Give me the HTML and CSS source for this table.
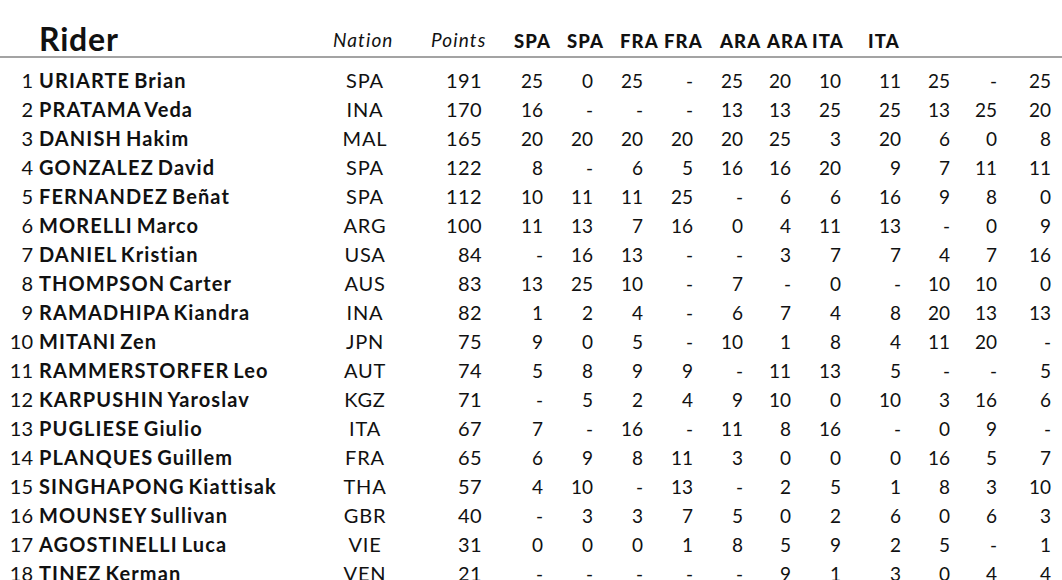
FILE: index.html
```html
<!DOCTYPE html>
<html>
<head>
<meta charset="utf-8">
<link rel="stylesheet" href="styles.css">
</head>
<body>
<div class="standings">
  <div class="head">
    <div class="h-rider">Rider</div>
    <div class="h-sub h-nation">Nation</div>
    <div class="h-sub h-points">Points</div>
    <div class="h-race w53">SPA</div>
    <div class="h-race w53">SPA</div>
    <div class="h-race w44">FRA</div>
    <div class="h-race w56">FRA</div>
    <div class="h-race w47">ARA</div>
    <div class="h-race w45">ARA</div>
    <div class="h-race w56">ITA</div>
    <div class="h-race">ITA</div>
  </div>
  <div class="rows">
    <div class="row"><span class="pos">1</span><span class="name">URIARTE Brian</span><span class="nat">SPA</span><span class="pts">191</span><span class="v">25</span><span class="v">0</span><span class="v">25</span><span class="v">-</span><span class="v">25</span><span class="v">20</span><span class="v">10</span><span class="v">11</span><span class="v">25</span><span class="v">-</span><span class="v">25</span></div>
    <div class="row"><span class="pos">2</span><span class="name">PRATAMA Veda</span><span class="nat">INA</span><span class="pts">170</span><span class="v">16</span><span class="v">-</span><span class="v">-</span><span class="v">-</span><span class="v">13</span><span class="v">13</span><span class="v">25</span><span class="v">25</span><span class="v">13</span><span class="v">25</span><span class="v">20</span></div>
    <div class="row"><span class="pos">3</span><span class="name">DANISH Hakim</span><span class="nat">MAL</span><span class="pts">165</span><span class="v">20</span><span class="v">20</span><span class="v">20</span><span class="v">20</span><span class="v">20</span><span class="v">25</span><span class="v">3</span><span class="v">20</span><span class="v">6</span><span class="v">0</span><span class="v">8</span></div>
    <div class="row"><span class="pos">4</span><span class="name">GONZALEZ David</span><span class="nat">SPA</span><span class="pts">122</span><span class="v">8</span><span class="v">-</span><span class="v">6</span><span class="v">5</span><span class="v">16</span><span class="v">16</span><span class="v">20</span><span class="v">9</span><span class="v">7</span><span class="v">11</span><span class="v">11</span></div>
    <div class="row"><span class="pos">5</span><span class="name">FERNANDEZ Beñat</span><span class="nat">SPA</span><span class="pts">112</span><span class="v">10</span><span class="v">11</span><span class="v">11</span><span class="v">25</span><span class="v">-</span><span class="v">6</span><span class="v">6</span><span class="v">16</span><span class="v">9</span><span class="v">8</span><span class="v">0</span></div>
    <div class="row"><span class="pos">6</span><span class="name">MORELLI Marco</span><span class="nat">ARG</span><span class="pts">100</span><span class="v">11</span><span class="v">13</span><span class="v">7</span><span class="v">16</span><span class="v">0</span><span class="v">4</span><span class="v">11</span><span class="v">13</span><span class="v">-</span><span class="v">0</span><span class="v">9</span></div>
    <div class="row"><span class="pos">7</span><span class="name">DANIEL Kristian</span><span class="nat">USA</span><span class="pts">84</span><span class="v">-</span><span class="v">16</span><span class="v">13</span><span class="v">-</span><span class="v">-</span><span class="v">3</span><span class="v">7</span><span class="v">7</span><span class="v">4</span><span class="v">7</span><span class="v">16</span></div>
    <div class="row"><span class="pos">8</span><span class="name">THOMPSON Carter</span><span class="nat">AUS</span><span class="pts">83</span><span class="v">13</span><span class="v">25</span><span class="v">10</span><span class="v">-</span><span class="v">7</span><span class="v">-</span><span class="v">0</span><span class="v">-</span><span class="v">10</span><span class="v">10</span><span class="v">0</span></div>
    <div class="row"><span class="pos">9</span><span class="name">RAMADHIPA Kiandra</span><span class="nat">INA</span><span class="pts">82</span><span class="v">1</span><span class="v">2</span><span class="v">4</span><span class="v">-</span><span class="v">6</span><span class="v">7</span><span class="v">4</span><span class="v">8</span><span class="v">20</span><span class="v">13</span><span class="v">13</span></div>
    <div class="row"><span class="pos">10</span><span class="name">MITANI Zen</span><span class="nat">JPN</span><span class="pts">75</span><span class="v">9</span><span class="v">0</span><span class="v">5</span><span class="v">-</span><span class="v">10</span><span class="v">1</span><span class="v">8</span><span class="v">4</span><span class="v">11</span><span class="v">20</span><span class="v">-</span></div>
    <div class="row"><span class="pos">11</span><span class="name">RAMMERSTORFER Leo</span><span class="nat">AUT</span><span class="pts">74</span><span class="v">5</span><span class="v">8</span><span class="v">9</span><span class="v">9</span><span class="v">-</span><span class="v">11</span><span class="v">13</span><span class="v">5</span><span class="v">-</span><span class="v">-</span><span class="v">5</span></div>
    <div class="row"><span class="pos">12</span><span class="name">KARPUSHIN Yaroslav</span><span class="nat">KGZ</span><span class="pts">71</span><span class="v">-</span><span class="v">5</span><span class="v">2</span><span class="v">4</span><span class="v">9</span><span class="v">10</span><span class="v">0</span><span class="v">10</span><span class="v">3</span><span class="v">16</span><span class="v">6</span></div>
    <div class="row"><span class="pos">13</span><span class="name">PUGLIESE Giulio</span><span class="nat">ITA</span><span class="pts">67</span><span class="v">7</span><span class="v">-</span><span class="v">16</span><span class="v">-</span><span class="v">11</span><span class="v">8</span><span class="v">16</span><span class="v">-</span><span class="v">0</span><span class="v">9</span><span class="v">-</span></div>
    <div class="row"><span class="pos">14</span><span class="name">PLANQUES Guillem</span><span class="nat">FRA</span><span class="pts">65</span><span class="v">6</span><span class="v">9</span><span class="v">8</span><span class="v">11</span><span class="v">3</span><span class="v">0</span><span class="v">0</span><span class="v">0</span><span class="v">16</span><span class="v">5</span><span class="v">7</span></div>
    <div class="row"><span class="pos">15</span><span class="name">SINGHAPONG Kiattisak</span><span class="nat">THA</span><span class="pts">57</span><span class="v">4</span><span class="v">10</span><span class="v">-</span><span class="v">13</span><span class="v">-</span><span class="v">2</span><span class="v">5</span><span class="v">1</span><span class="v">8</span><span class="v">3</span><span class="v">10</span></div>
    <div class="row"><span class="pos">16</span><span class="name">MOUNSEY Sullivan</span><span class="nat">GBR</span><span class="pts">40</span><span class="v">-</span><span class="v">3</span><span class="v">3</span><span class="v">7</span><span class="v">5</span><span class="v">0</span><span class="v">2</span><span class="v">6</span><span class="v">0</span><span class="v">6</span><span class="v">3</span></div>
    <div class="row"><span class="pos">17</span><span class="name">AGOSTINELLI Luca</span><span class="nat">VIE</span><span class="pts">31</span><span class="v">0</span><span class="v">0</span><span class="v">0</span><span class="v">1</span><span class="v">8</span><span class="v">5</span><span class="v">9</span><span class="v">2</span><span class="v">5</span><span class="v">-</span><span class="v">1</span></div>
    <div class="row"><span class="pos">18</span><span class="name">TINEZ Kerman</span><span class="nat">VEN</span><span class="pts">21</span><span class="v">-</span><span class="v">-</span><span class="v">-</span><span class="v">-</span><span class="v">-</span><span class="v">9</span><span class="v">1</span><span class="v">3</span><span class="v">0</span><span class="v">4</span><span class="v">4</span></div>
  </div>
</div>
</body>
</html>
```
FILE: styles.css
```css
html, body {
  margin: 0;
  padding: 0;
  background: #ffffff;
}
body {
  font-family: "Lato", "Noto Sans", sans-serif;
  color: #111111;
  overflow: hidden;
}
.standings {
  width: 1062px;
}
.head {
  display: flex;
  align-items: flex-end;
  height: 56px;
  border-bottom: 2px solid #a3a3a3;
  box-sizing: content-box;
}
.h-rider {
  width: 294px;
  padding-left: 39px;
  font-size: 32px;
  font-weight: 700;
  line-height: 34px;
  letter-spacing: 0.8px;
}
.h-sub {
  font-style: italic;
  font-size: 19px;
  line-height: 22px;
  padding-bottom: 5px;
  letter-spacing: 1.1px;
}
.h-nation { width: 98px; }
.h-points { width: 83px; }
.h-race {
  font-size: 18.5px;
  font-weight: 900;
  line-height: 20px;
  padding-bottom: 5px;
  letter-spacing: 1.1px;
}
.w53 { width: 53px; }
.w44 { width: 44px; }
.w56 { width: 56px; }
.w47 { width: 47px; }
.w45 { width: 45px; }
.rows {
  padding-top: 8px;
}
.row {
  display: grid;
  grid-template-columns: 39px 291px 70px 82px 61px 50px 50px 50px 50px 48px 50px 60px 49px 47px 54px;
  align-items: baseline;
  height: 29px;
  line-height: 29px;
  white-space: nowrap;
}
.pos {
  font-size: 20px;
  text-align: right;
  padding-right: 6px;
}
.name {
  font-size: 20px;
  font-weight: 700;
  letter-spacing: 1.1px;
  word-spacing: -2px;
}
.nat {
  font-size: 20px;
  text-align: center;
  letter-spacing: 0.8px;
}
.pts {
  font-size: 20px;
  text-align: right;
  letter-spacing: 0.4px;
}
.v {
  font-size: 19px;
  text-align: right;
}
```
